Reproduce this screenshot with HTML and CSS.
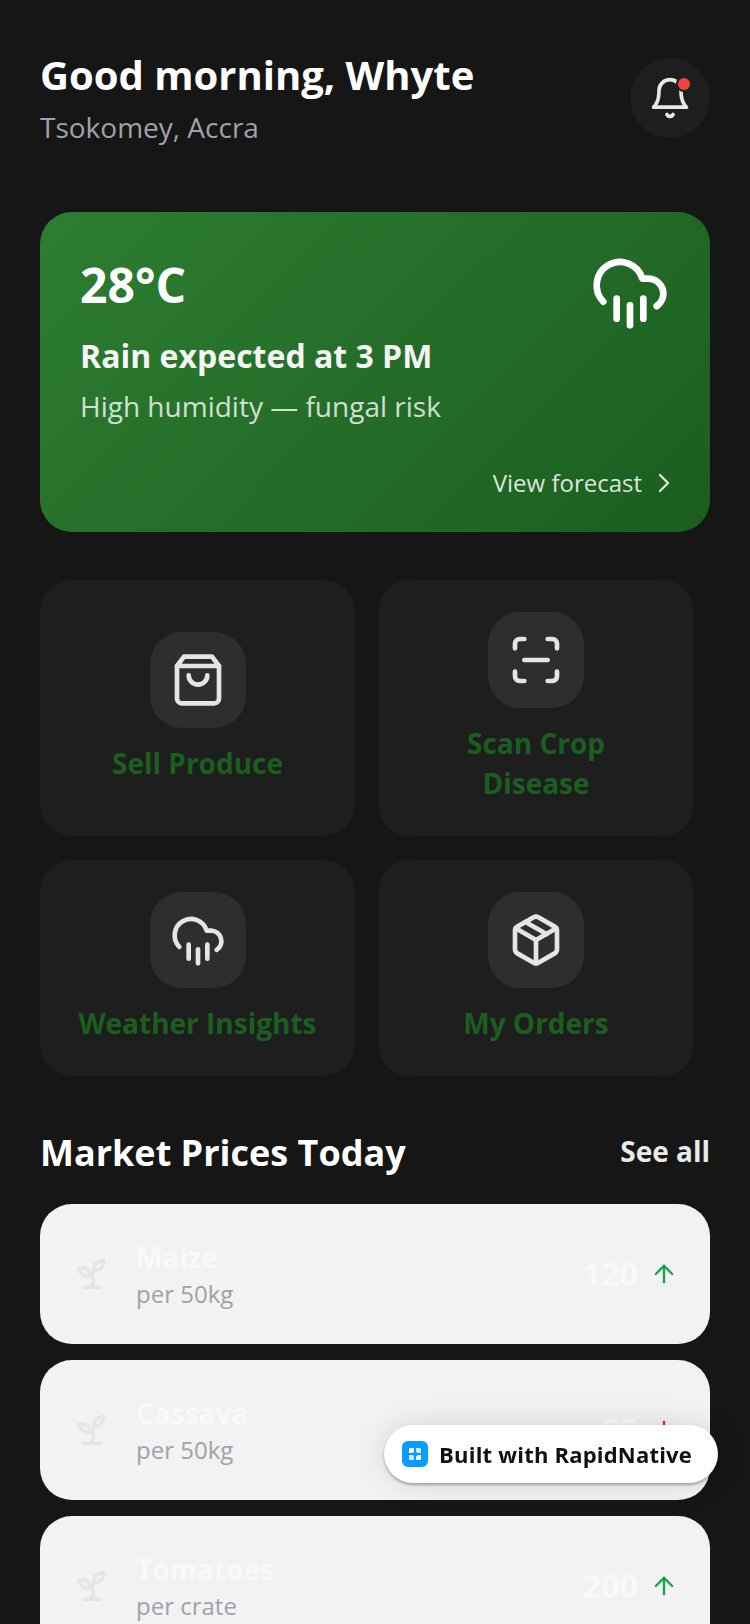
FILE: index.html
```html
<!DOCTYPE html>
<html>
  <head>
    <link rel="stylesheet" href="styles.css">
  </head>
  <body>
    <div id="page">
      <div class="header">
        <div>
          <div class="greeting">Good morning, Whyte</div>
          <div class="location">Tsokomey, Accra</div>
        </div>
        <div class="bellButton">
          <svg class="bellIcon" viewBox="0 0 24 24"><path d="M6 8a6 6 0 0 1 12 0c0 7 3 9 3 9H3s3-2 3-9"/><path d="M10.3 21a1.94 1.94 0 0 0 3.4 0"/></svg>
          <span class="bellDot"></span>
        </div>
      </div>

      <div class="weather">
        <div class="weatherTop">
          <div>
            <div class="temp">28°C</div>
            <div class="rain">Rain expected at 3 PM</div>
            <div class="humidity">High humidity — fungal risk</div>
          </div>
          <svg class="weatherIcon" viewBox="0 0 24 24"><path d="M4 14.899A7 7 0 1 1 15.71 8h1.79a4.5 4.5 0 0 1 2.5 8.242"/><path d="M16 14v6"/><path d="M8 14v6"/><path d="M12 16v6"/></svg>
        </div>
        <div class="forecast">
          <span>View forecast</span>
          <svg class="chevron" viewBox="0 0 24 24"><path d="m9 18 6-6-6-6"/></svg>
        </div>
      </div>

      <div class="actions">
        <div class="action">
          <div class="actionIcon">
            <svg viewBox="0 0 24 24"><path d="M6 2 3 6v14a2 2 0 0 0 2 2h14a2 2 0 0 0 2-2V6l-3-4Z"/><path d="M3 6h18"/><path d="M16 10a4 4 0 0 1-8 0"/></svg>
          </div>
          <div class="actionLabel">Sell Produce</div>
        </div>
        <div class="action">
          <div class="actionIcon">
            <svg viewBox="0 0 24 24"><path d="M3 7V5a2 2 0 0 1 2-2h2"/><path d="M17 3h2a2 2 0 0 1 2 2v2"/><path d="M21 17v2a2 2 0 0 1-2 2h-2"/><path d="M7 21H5a2 2 0 0 1-2-2v-2"/><path d="M7 12h10"/></svg>
          </div>
          <div class="actionLabel">Scan Crop<br>Disease</div>
        </div>
        <div class="action">
          <div class="actionIcon">
            <svg viewBox="0 0 24 24"><path d="M4 14.899A7 7 0 1 1 15.71 8h1.79a4.5 4.5 0 0 1 2.5 8.242"/><path d="M16 14v6"/><path d="M8 14v6"/><path d="M12 16v6"/></svg>
          </div>
          <div class="actionLabel">Weather Insights</div>
        </div>
        <div class="action">
          <div class="actionIcon">
            <svg viewBox="0 0 24 24"><path d="m7.5 4.27 9 5.15"/><path d="M21 8a2 2 0 0 0-1-1.73l-7-4a2 2 0 0 0-2 0l-7 4A2 2 0 0 0 3 8v8a2 2 0 0 0 1 1.73l7 4a2 2 0 0 0 2 0l7-4A2 2 0 0 0 21 16Z"/><path d="m3.3 7 8.7 5 8.7-5"/><path d="M12 22V12"/></svg>
          </div>
          <div class="actionLabel">My Orders</div>
        </div>
      </div>

      <div class="sectionHead">
        <div class="sectionTitle">Market Prices Today</div>
        <div class="seeAll">See all</div>
      </div>

      <div class="prices">
        <div class="price">
          <svg class="sprout" viewBox="0 0 24 24"><path d="M7 20h10"/><path d="M10 20c5.5-2.5.8-6.4 3-10"/><path d="M9.5 9.4c1.1.8 1.8 2.2 2.3 3.7-2 .4-3.5.4-4.8-.3-1.2-.6-2.3-1.9-3-4.2 2.8-.5 4.4 0 5.5.8z"/><path d="M14.1 6a7 7 0 0 0-1.1 4c1.9-.1 3.3-.6 4.3-1.4 1-1 1.6-2.3 1.7-4.6-2.7.1-4 1-4.9 2z"/></svg>
          <div class="priceInfo">
            <div class="priceName">Maize</div>
            <div class="priceUnit">per 50kg</div>
          </div>
          <div class="priceValue">120</div>
          <svg class="arrow up" viewBox="0 0 24 24"><path d="m5 12 7-7 7 7"/><path d="M12 19V5"/></svg>
        </div>
        <div class="price">
          <svg class="sprout" viewBox="0 0 24 24"><path d="M7 20h10"/><path d="M10 20c5.5-2.5.8-6.4 3-10"/><path d="M9.5 9.4c1.1.8 1.8 2.2 2.3 3.7-2 .4-3.5.4-4.8-.3-1.2-.6-2.3-1.9-3-4.2 2.8-.5 4.4 0 5.5.8z"/><path d="M14.1 6a7 7 0 0 0-1.1 4c1.9-.1 3.3-.6 4.3-1.4 1-1 1.6-2.3 1.7-4.6-2.7.1-4 1-4.9 2z"/></svg>
          <div class="priceInfo">
            <div class="priceName">Cassava</div>
            <div class="priceUnit">per 50kg</div>
          </div>
          <div class="priceValue">85</div>
          <svg class="arrow down" viewBox="0 0 24 24"><path d="M12 5v14"/><path d="m19 12-7 7-7-7"/></svg>
        </div>
        <div class="price">
          <svg class="sprout" viewBox="0 0 24 24"><path d="M7 20h10"/><path d="M10 20c5.5-2.5.8-6.4 3-10"/><path d="M9.5 9.4c1.1.8 1.8 2.2 2.3 3.7-2 .4-3.5.4-4.8-.3-1.2-.6-2.3-1.9-3-4.2 2.8-.5 4.4 0 5.5.8z"/><path d="M14.1 6a7 7 0 0 0-1.1 4c1.9-.1 3.3-.6 4.3-1.4 1-1 1.6-2.3 1.7-4.6-2.7.1-4 1-4.9 2z"/></svg>
          <div class="priceInfo">
            <div class="priceName">Tomatoes</div>
            <div class="priceUnit">per crate</div>
          </div>
          <div class="priceValue">200</div>
          <svg class="arrow up" viewBox="0 0 24 24"><path d="m5 12 7-7 7 7"/><path d="M12 19V5"/></svg>
        </div>
      </div>
    </div>

    <div class="builtWith">
      <svg class="builtLogo" viewBox="0 0 26 26">
        <rect width="26" height="26" rx="6" fill="#0a9dff"/>
        <path d="M7 8a1 1 0 0 1 1-1h4v4l-2 1H7z" fill="#fff"/>
        <path d="M14 7h4a1 1 0 0 1 1 1v4h-4l-1-2z" fill="#fff" opacity="0.8"/>
        <path d="M7 14h4l1 2v3H8a1 1 0 0 1-1-1z" fill="#fff" opacity="0.8"/>
        <path d="M16 14h3v4a1 1 0 0 1-1 1h-4v-3z" fill="#fff"/>
      </svg>
      <span>Built with RapidNative</span>
    </div>
  </body>
</html>
```

FILE: styles.css
```css
html, body {
    margin: 0;
    height: 1624px;
    overflow: hidden;
    background: #161616;
}
body {
    font-family: "Open Sans", sans-serif;
    color: #fff;
}
svg {
    fill: none;
    stroke: currentColor;
    stroke-width: 2;
    stroke-linecap: round;
    stroke-linejoin: round;
    display: block;
    flex-shrink: 0;
}
#page {
    padding: 48px 40px 0;
}

.header {
    display: flex;
    justify-content: space-between;
    align-items: center;
    padding-bottom: 64px;
}
.greeting {
    font-size: 40px;
    line-height: 54px;
    font-weight: 700;
    margin-bottom: 5px;
}
.location {
    font-size: 28px;
    line-height: 41px;
    color: #a1a1aa;
}
.bellButton {
    position: relative;
    display: flex;
    align-items: center;
    justify-content: center;
    width: 80px;
    height: 80px;
    border-radius: 50%;
    background: #1e1e1e;
}
.bellIcon {
    width: 44px;
    height: 44px;
    color: #e8e8e8;
}
.bellDot {
    position: absolute;
    top: 20px;
    right: 20px;
    width: 12px;
    height: 12px;
    border-radius: 50%;
    background: #ef4444;
    box-shadow: 0 0 0 2px #1e1e1e;
}

.weather {
    height: 320px;
    box-sizing: border-box;
    padding: 41px 40px 33px;
    border-radius: 32px;
    background: linear-gradient(135deg, #2e7d32, #1b5e20);
    margin-bottom: 48px;
    display: flex;
    flex-direction: column;
    justify-content: space-between;
}
.weatherTop {
    display: flex;
    justify-content: space-between;
}
.weatherIcon {
    width: 80px;
    height: 80px;
    margin-top: -1px;
}
.temp {
    font-size: 48px;
    line-height: 64px;
    font-weight: 700;
    margin-bottom: 17px;
}
.rain {
    font-size: 32px;
    line-height: 44px;
    font-weight: 700;
    color: #f5f5f5;
    margin-bottom: 8px;
}
.humidity {
    font-size: 28px;
    line-height: 40px;
    color: rgba(255, 255, 255, 0.8);
}
.forecast {
    display: flex;
    justify-content: flex-end;
    align-items: center;
    gap: 6px;
    margin-right: -10px;
    font-size: 24px;
    line-height: 32px;
    color: rgba(255, 255, 255, 0.85);
}
.chevron {
    width: 32px;
    height: 32px;
    stroke-width: 1.75;
}

.actions {
    display: grid;
    grid-template-columns: 315px 316px;
    column-gap: 23px;
    row-gap: 24px;
    margin-bottom: 53px;
}
.action {
    box-sizing: border-box;
    padding: 32px;
    border-radius: 32px;
    background: #1e1e1e;
    display: flex;
    flex-direction: column;
    align-items: center;
    justify-content: center;
}
.actionIcon {
    width: 96px;
    height: 96px;
    border-radius: 32px;
    background: #2e2e2e;
    display: flex;
    align-items: center;
    justify-content: center;
    margin-bottom: 15px;
    color: #e5e5e5;
}
.actionIcon svg {
    width: 56px;
    height: 56px;
}
.actionLabel {
    font-size: 28px;
    line-height: 40px;
    font-weight: 700;
    color: #1b5e20;
    text-align: center;
    margin-bottom: 1px;
}

.sectionHead {
    display: flex;
    justify-content: space-between;
    align-items: flex-start;
    margin-bottom: 27px;
}
.sectionTitle {
    font-size: 36px;
    line-height: 48px;
    font-weight: 700;
}
.seeAll {
    font-size: 28px;
    line-height: 44px;
    font-weight: 700;
    color: #eaeaea;
}

.prices {
    display: flex;
    flex-direction: column;
    gap: 16px;
}
.price {
    display: flex;
    align-items: center;
    height: 140px;
    box-sizing: border-box;
    padding: 0 32px;
    border-radius: 32px;
    background: #f2f2f2;
    color: #f9f9f9;
}
.sprout {
    width: 40px;
    height: 40px;
    color: #e5e5e5;
    margin-right: 24px;
}
.priceInfo {
    flex: 1;
}
.priceName {
    font-size: 28px;
    line-height: 38px;
    font-weight: 700;
    margin-top: 2px;
}
.priceUnit {
    font-size: 24px;
    line-height: 36px;
    color: #a1a1aa;
}
.priceValue {
    font-size: 32px;
    line-height: 44px;
    font-weight: 700;
    margin-right: 12px;
}
.arrow {
    width: 28px;
    height: 28px;
}
.up { color: #16a34a; }
.down { color: #dc2626; }

.builtWith {
    position: fixed;
    right: 32px;
    bottom: 141px;
    display: flex;
    align-items: center;
    gap: 11px;
    height: 58px;
    box-sizing: border-box;
    padding: 0 26px 0 18px;
    border-radius: 29px;
    background: #fff;
    color: #111;
    font-size: 22px;
    font-weight: 700;
    letter-spacing: 0.2px;
    box-shadow: 0 2px 3px rgba(0, 0, 0, 0.3), 0 0 30px rgba(0, 0, 0, 0.12);
}
.builtLogo {
    width: 26px;
    height: 26px;
    stroke: none;
}
```
